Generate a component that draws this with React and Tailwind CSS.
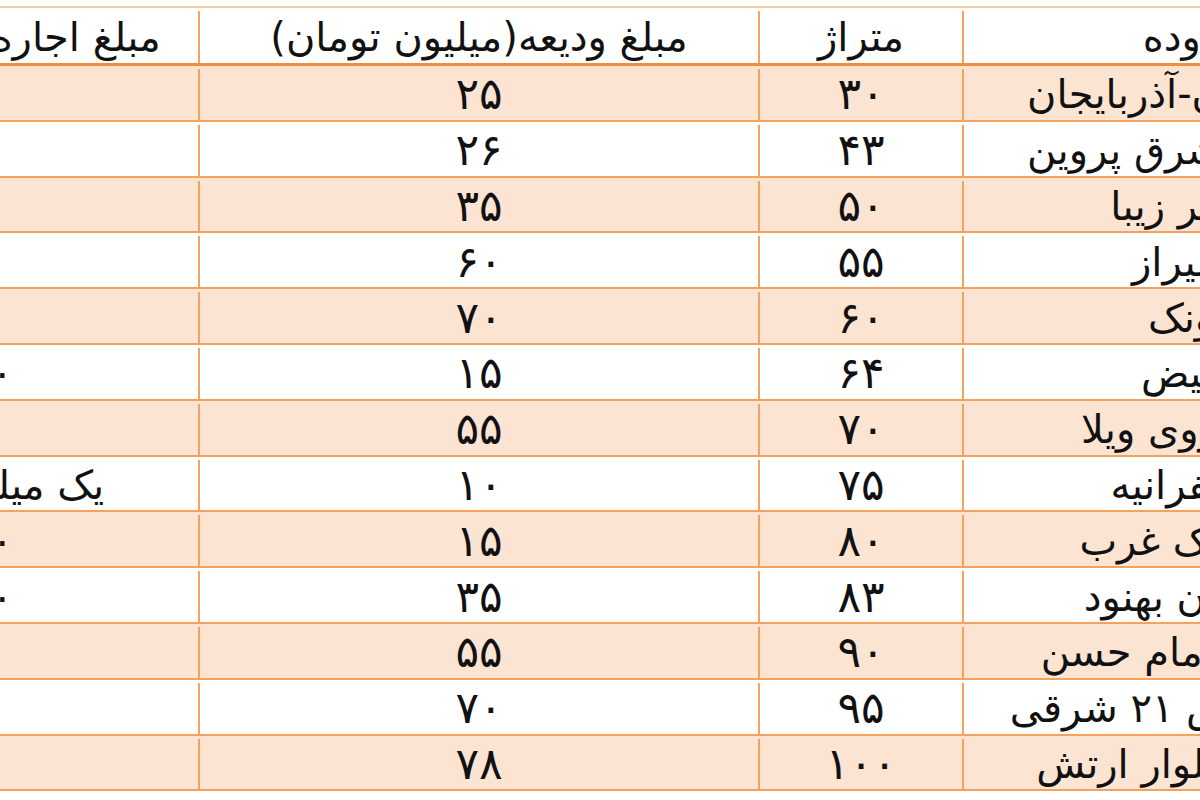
const rows = [
  { area: 'ستارخان-آذربایجان', size: '۳۰', deposit: '۲۵', rent: '۸۰۰' },
  { area: 'خیابان شرق پروین', size: '۴۳', deposit: '۲۶', rent: '۷۰۰' },
  { area: 'شهر زیبا', size: '۵۰', deposit: '۳۵', rent: '۹۰۰' },
  { area: 'شیراز', size: '۵۵', deposit: '۶۰', rent: '۵۰۰' },
  { area: 'ونک', size: '۶۰', deposit: '۷۰', rent: '۹۰۰' },
  { area: 'فیض', size: '۶۴', deposit: '۱۵', rent: '۱۵۰۰' },
  { area: 'خسروی ویلا', size: '۷۰', deposit: '۵۵', rent: '۸۰۰' },
  { area: 'زعفرانیه', size: '۷۵', deposit: '۱۰', rent: 'یک میلیون و صد' },
  { area: 'شهرک غرب', size: '۸۰', deposit: '۱۵', rent: '۱۲۰۰' },
  { area: 'خیابان بهنود', size: '۸۳', deposit: '۳۵', rent: '۱۳۰۰' },
  { area: 'میدان امام حسن', size: '۹۰', deposit: '۵۵', rent: '۹۰۰' },
  { area: 'تهرانپارس ۲۱ شرقی', size: '۹۵', deposit: '۷۰', rent: '۹۰۰' },
  { area: 'انتهای بلوار ارتش', size: '۱۰۰', deposit: '۷۸', rent: '۸۰۰' },
]

const cell = 'flex items-center justify-center whitespace-nowrap'
const line = 'border-l-2 border-[#f5a25c]'

function HeaderRow() {
  return (
    <div
      dir="rtl"
      className="grid grid-cols-[436px_204px_560px_456px] h-[60px] pt-[3px] border-t-2 border-t-[#f9cba6] border-b-[3px] border-b-[#f28d3e] bg-white"
    >
      <div className={`${cell} ${line} pl-[50px]`}>محدوده</div>
      <div className={`${cell} ${line}`}>متراژ</div>
      <div className={`${cell} ${line}`}>مبلغ ودیعه(میلیون تومان)</div>
      <div className={cell}>مبلغ اجاره(هزار تومان)</div>
    </div>
  )
}

function DataRow({ r, shaded }) {
  return (
    <div
      dir="rtl"
      className={`grid grid-cols-[436px_204px_560px_456px] h-[55.8px] pt-[3px] border-b-2 border-[#f5a25c] ${shaded ? 'bg-[#fce4d3]' : 'bg-white'}`}
    >
      <div className={`${cell} ${line}`}>{r.area}</div>
      <div className={`${cell} ${line} text-[44px] tracking-[2px]`}>{r.size}</div>
      <div className={`${cell} ${line} text-[44px] tracking-[2px]`}>{r.deposit}</div>
      <div className={cell}>{r.rent}</div>
    </div>
  )
}

export default function App() {
  return (
    <div className="w-[1200px] h-[800px] overflow-hidden bg-white pt-[6px]">
      <div
        className="w-[1656px] -ml-[258px] text-[40px] leading-none text-[#111]"
        style={{ fontFamily: '"DejaVu Sans", Tahoma, sans-serif' }}
      >
        <HeaderRow />
        {rows.map((r, i) => (
          <DataRow key={i} r={r} shaded={i % 2 === 0} />
        ))}
      </div>
    </div>
  )
}
